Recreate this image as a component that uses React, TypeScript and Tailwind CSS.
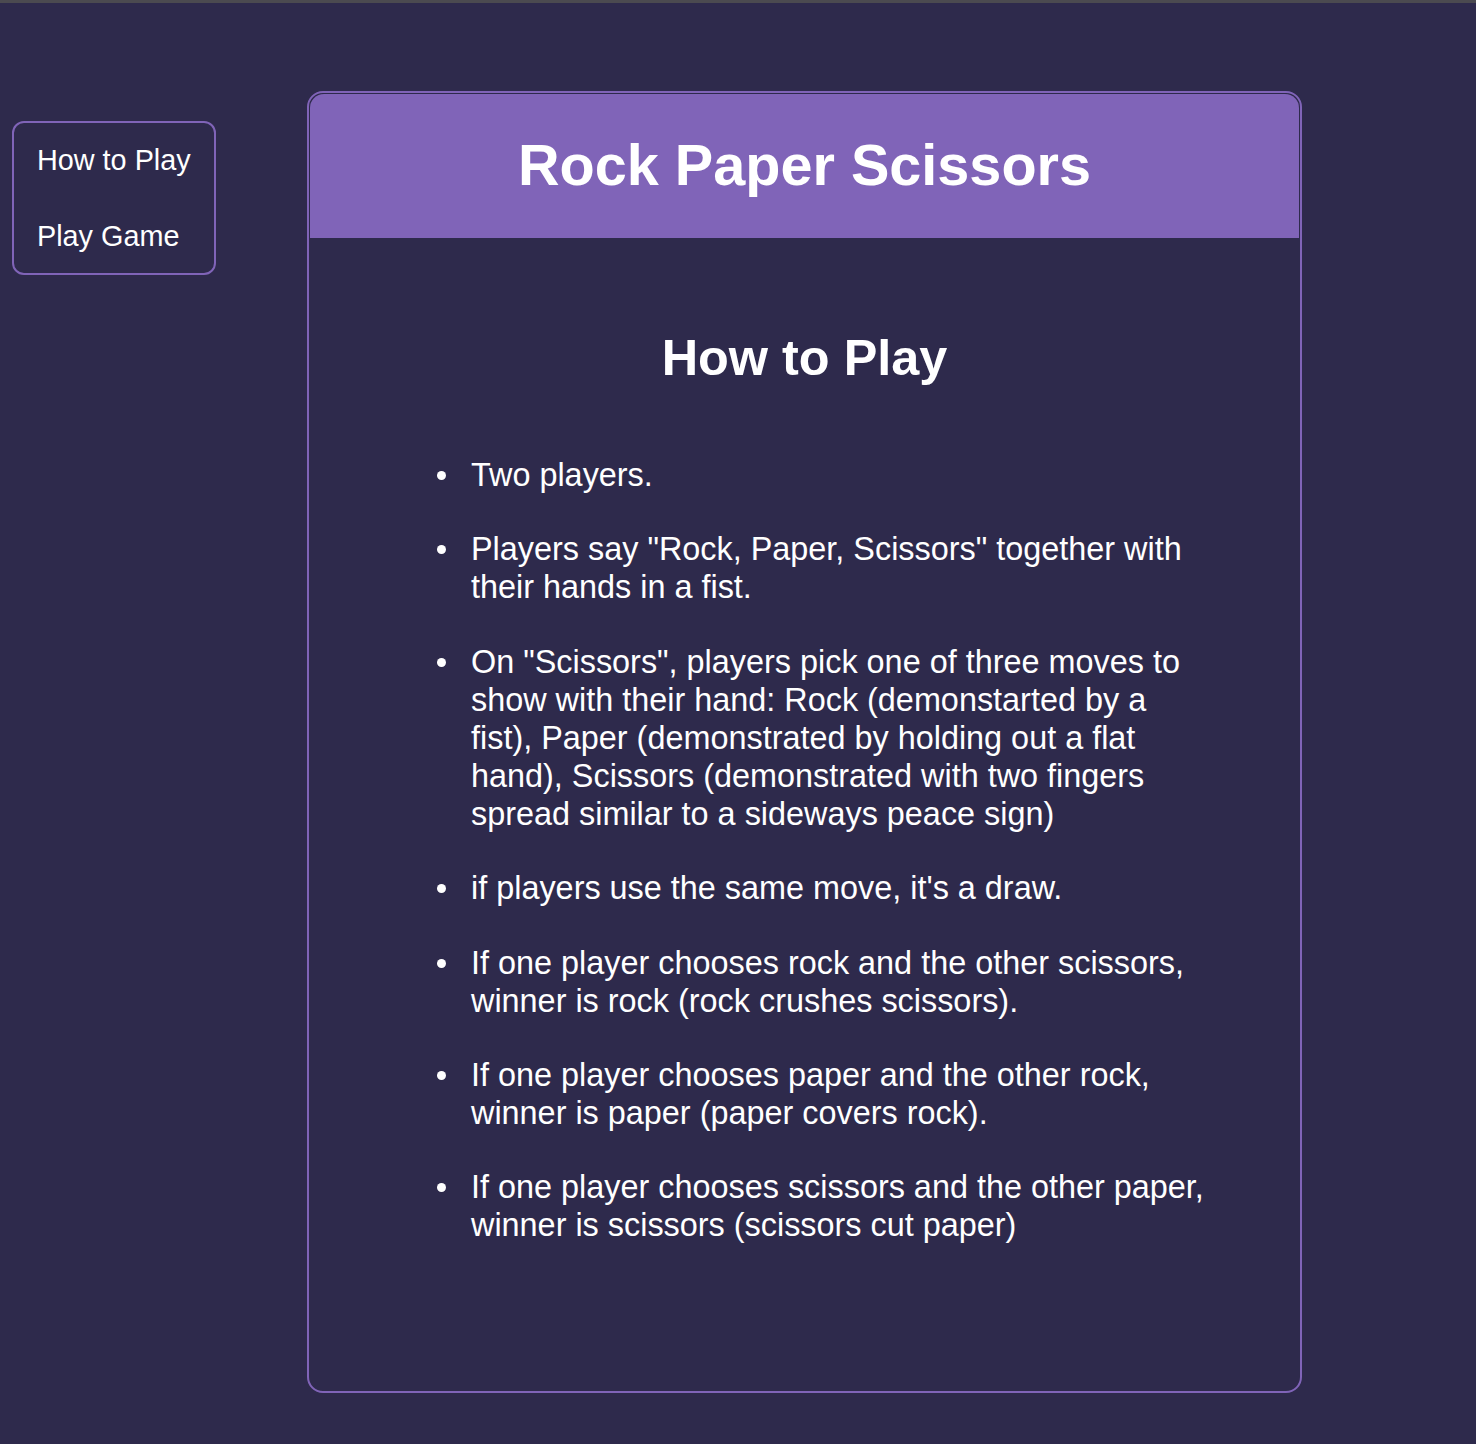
const rules = [
  "Two players.",
  'Players say "Rock, Paper, Scissors" together with their hands in a fist.',
  'On "Scissors", players pick one of three moves to show with their hand: Rock (demonstarted by a fist), Paper (demonstrated by holding out a flat hand), Scissors (demonstrated with two fingers spread similar to a sideways peace sign)',
  "if players use the same move, it's a draw.",
  "If one player chooses rock and the other scissors, winner is rock (rock crushes scissors).",
  "If one player chooses paper and the other rock, winner is paper (paper covers rock).",
  "If one player chooses scissors and the other paper, winner is scissors (scissors cut paper)",
];

const App = () => {
  return (
    <div className="min-h-screen bg-[#2e2a4c] text-white font-['Liberation_Sans',Arial,sans-serif]">
      {/* browser chrome line */}
      <div className="h-[3px] bg-[#4b4a50]" />

      <div className="flex items-start">
        {/* ── Side nav ── */}
        <nav className="ml-3 mt-[118px] flex w-[204px] flex-col gap-[41px] rounded-xl border-2 border-[#8064b8] pb-[19px] pl-[23px] pt-[20px] text-[28.8px] leading-[35px]">
          <a href="#">How to Play</a>
          <a href="#">Play Game</a>
        </nav>

        {/* ── Main card ── */}
        <main className="ml-[91px] mt-[88px] flex h-[1302px] w-[995px] flex-col rounded-2xl border-2 border-[#8064b8]">
          <header className="mx-px mt-px flex h-[144px] items-center justify-center rounded-t-[14px] bg-[#8064b8]">
            <h1 className="text-[57.6px] font-bold leading-none">Rock Paper Scissors</h1>
          </header>

          <section className="flex flex-col">
            <h2 className="mt-[91px] text-center text-[50.4px] font-bold leading-[58px]">How to Play</h2>
            <ul className="ml-[162px] mt-[69px] w-[740px] list-none text-[32.4px] leading-[38px]">
              {rules.map((r) => (
                <li key={r} className="relative mb-[36.4px]">
                  {/* bullet */}
                  <span className="absolute left-[-34px] top-[15px] h-[9px] w-[9px] rounded-full bg-white" />
                  {r}
                </li>
              ))}
            </ul>
          </section>
        </main>
      </div>
    </div>
  );
};

export default App;
